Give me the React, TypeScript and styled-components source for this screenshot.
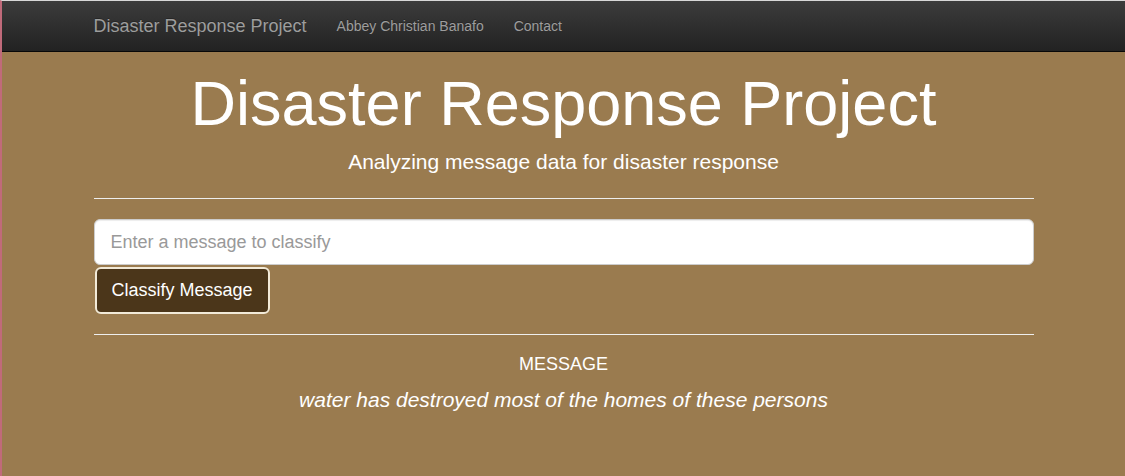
import React from "react";
import styled, { createGlobalStyle } from "styled-components";

const Global = createGlobalStyle`
  html, body { margin: 0; padding: 0; }
  body {
    background: #9a7b4f;
    font-family: "Liberation Sans", Arial, sans-serif;
    min-height: 476px;
    border-top: 1px solid #d8d8d8;
    border-left: 2px solid #c06a7a;
    box-sizing: border-box;
  }
  * { box-sizing: border-box; }
`;

const Navbar = styled.nav`
  height: 51px;
  background-image: linear-gradient(to bottom, #3c3c3c 0%, #222222 100%);
  border-bottom: 1px solid #080808;
`;

const Container = styled.div`
  width: 940px;
  margin: 0 auto;
`;

const NavInner = styled(Container)`
  display: flex;
  align-items: center;
  height: 50px;
`;

const Brand = styled.a`
  font-size: 18px;
  color: #9d9d9d;
  text-decoration: none;
  margin-right: 30px;
  text-shadow: 0 -1px 0 rgba(0, 0, 0, 0.25);
`;

const NavLink = styled.a`
  font-size: 14px;
  color: #9d9d9d;
  text-decoration: none;
  margin-right: 30px;
  text-shadow: 0 -1px 0 rgba(0, 0, 0, 0.25);
`;

const Jumbo = styled.div`
  text-align: center;
  color: #fff;
  padding-top: 17px;
`;

const Title = styled.h1`
  font-size: 63px;
  font-weight: 400;
  line-height: 1.1;
  margin: 0;
`;

const Subtitle = styled.p`
  font-size: 21px;
  margin: 11px 0 0;
  line-height: 1.2;
`;

const Rule = styled.hr<{ $top: number }>`
  border: 0;
  border-top: 1px solid #eee;
  margin: ${(p) => p.$top}px 0 20px;
`;

const Input = styled.input`
  display: block;
  width: 100%;
  height: 46px;
  padding: 10px 16px;
  font-size: 18px;
  font-family: inherit;
  border: 1px solid #ccc;
  border-radius: 6px;
  background: #fff;
  box-shadow: inset 0 1px 1px rgba(0, 0, 0, 0.075);
  &::placeholder { color: #999; }
`;

const Button = styled.button`
  display: block;
  margin-top: 2px;
  height: 47px;
  padding: 0 15px;
  font-size: 18px;
  font-family: inherit;
  color: #fff;
  background: #4b361a;
  border: 2px solid #f2ead8;
  border-radius: 6px;
  margin-left: 1px;
`;

const Result = styled.div`
  text-align: center;
  color: #fff;
`;

const Label = styled.div`
  font-size: 18px;
  line-height: 1.1;
  margin-top: 19px;
`;

const Message = styled.div`
  font-size: 21px;
  font-style: italic;
  margin-top: 13px;
`;

export default function App() {
  return (
    <>
      <Global />
      <Navbar>
        <NavInner>
          <Brand href="#">Disaster Response Project</Brand>
          <NavLink href="#">Abbey Christian Banafo</NavLink>
          <NavLink href="#">Contact</NavLink>
        </NavInner>
      </Navbar>
      <Container>
        <Jumbo>
          <Title>Disaster Response Project</Title>
          <Subtitle>Analyzing message data for disaster response</Subtitle>
        </Jumbo>
        <Rule $top={24} />
        <Input placeholder="Enter a message to classify" />
        <Button>Classify Message</Button>
        <Rule $top={20} />
        <Result>
          <Label>MESSAGE</Label>
          <Message>water has destroyed most of the homes of these persons</Message>
        </Result>
      </Container>
    </>
  );
}
